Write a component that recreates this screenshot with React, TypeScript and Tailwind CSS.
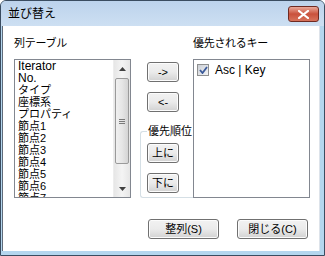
import React from "react";

const FONT = "font-['Liberation_Sans','Noto_Sans_CJK_JP',sans-serif]";

const columns = [
  "Iterator",
  "No.",
  "タイプ",
  "座標系",
  "プロパティ",
  "節点1",
  "節点2",
  "節点3",
  "節点4",
  "節点5",
  "節点6",
  "節点7",
];

function WinButton({ label, className = "" }: { label: string; className?: string }) {
  return (
    <button
      className={`h-[20px] rounded-[3px] border border-[#707070] bg-gradient-to-b from-[#f2f2f2] via-[#ebebeb] to-[#d2d2d2] shadow-[inset_0_0_0_1px_#fcfcfc] text-[11px] leading-[12px] text-black flex items-center justify-center ${className}`}
    >
      {label}
    </button>
  );
}

function ScrollBar() {
  return (
    <div className="w-[17px] h-full flex flex-col bg-gradient-to-r from-[#e6e6e6] via-[#f4f4f4] to-[#e6e6e6] border-l border-[#ededed]">
      {/* up arrow */}
      <div className="h-[17px] flex items-center justify-center">
        <svg width="7" height="4" viewBox="0 0 7 4">
          <path d="M3.5 0 L7 4 L0 4 Z" fill="#404040" />
        </svg>
      </div>
      <div className="flex-1 flex flex-col">
        {/* thumb */}
        <div className="mt-[1px] mx-[1px] h-[86px] rounded-[2px] border border-[#9a9a9a] bg-gradient-to-r from-[#f0f0f0] via-[#e6e6e6] to-[#d4d4d4] flex flex-col items-center justify-center gap-[1px]">
          <div className="w-[6px] h-[1px] bg-[#7a7a7a]" />
          <div className="w-[6px] h-[1px] bg-[#7a7a7a]" />
          <div className="w-[6px] h-[1px] bg-[#7a7a7a]" />
        </div>
      </div>
      {/* down arrow */}
      <div className="h-[17px] flex items-center justify-center">
        <svg width="7" height="4" viewBox="0 0 7 4">
          <path d="M0 0 L7 0 L3.5 4 Z" fill="#404040" />
        </svg>
      </div>
    </div>
  );
}

export default function App() {
  return (
    <div className={`w-[325px] h-[256px] flex flex-col border border-[#3a4c60] rounded-t-[6px] bg-[#b4d6ee] overflow-hidden ${FONT}`}>
      {/* Title bar */}
      <div className="h-[25px] flex items-center pl-[7px] pr-[5px] bg-gradient-to-b from-[#bcd3ec] to-[#cddff2]">
        <span className="text-[12px] leading-[12px] text-black">並び替え</span>
        <div className="ml-auto mt-[1px] w-[31px] h-[16px] rounded-[3px] border border-[#6f2a22] bg-gradient-to-b from-[#e9a99b] via-[#c9513c] to-[#d7735c] flex items-center justify-center">
          <svg width="11" height="9" viewBox="0 0 11 9">
            <path d="M1 1 L10 8 M10 1 L1 8" stroke="#ffffff" strokeWidth="2.2" strokeLinecap="square" />
          </svg>
        </div>
      </div>

      {/* Client area */}
      <div className="flex-1 ml-[1px] mr-[4px] mb-[4px] bg-white border-l border-[#5f6b7a] border-r border-r-[#dde3ea] flex flex-col pl-[11px] pt-[11px]">
        <div className="flex items-start">
          {/* left column */}
          <div className="w-[117px] flex flex-col">
            <div className="h-[12px] text-[11px] leading-[12px] text-black tracking-[-0.3px]">列テーブル</div>
            <div className="mt-[10px] h-[139px] border border-[#828790] flex">
              <div className="flex-1 overflow-hidden pl-[3px]">
                {columns.map((c, i) => (
                  <div
                    key={c}
                    className={
                      i < 2
                        ? "h-[12px] text-[12px] leading-[12px] text-black whitespace-nowrap"
                        : "h-[12px] text-[11px] leading-[12px] text-black whitespace-nowrap"
                    }
                  >
                    {c}
                  </div>
                ))}
              </div>
              <ScrollBar />
            </div>
          </div>

          {/* middle column */}
          <div className="ml-[9px] w-[53px] flex flex-col">
            <WinButton label="->" className="mt-[25px] ml-[7px] w-[32px]" />
            <WinButton label="<-" className="mt-[10px] ml-[7px] w-[32px]" />
            <fieldset className="mt-[13px] h-[73px] border border-r-0 border-[#d5dfe5] rounded-l-[3px] pl-[6px] flex flex-col">
              <legend className="px-[1px] text-[11px] leading-[12px] text-black whitespace-nowrap">優先順位</legend>
              <WinButton label="上に" className="mt-[6px] w-[32px]" />
              <WinButton label="下に" className="mt-[10px] w-[32px]" />
            </fieldset>
          </div>

          {/* right column */}
          <div className="w-[117px] flex flex-col">
            <div className="h-[12px] text-[11px] leading-[12px] text-black tracking-[-0.3px]">優先されるキー</div>
            <div className="mt-[10px] h-[139px] border border-[#828790] bg-white pl-[3px] pt-[4px]">
              <div className="flex items-center">
                <div className="w-[12px] h-[12px] border border-[#8e8f8f] bg-gradient-to-br from-[#cbcfd5] to-[#f4f4f6] flex items-center justify-center">
                  <svg width="9" height="8" viewBox="0 0 9 8">
                    <path d="M1 4 L3.5 7 L8 1" stroke="#3b5a9a" strokeWidth="1.8" fill="none" />
                  </svg>
                </div>
                <span className="ml-[6px] text-[12px] leading-[12px] text-black">Asc | Key</span>
              </div>
            </div>
          </div>
        </div>

        {/* bottom buttons */}
        <div className="mt-[21px] flex">
          <WinButton label="整列(S)" className="ml-[134px] w-[71px]" />
          <WinButton label="閉じる(C)" className="ml-[18px] w-[71px]" />
        </div>
      </div>
    </div>
  );
}
